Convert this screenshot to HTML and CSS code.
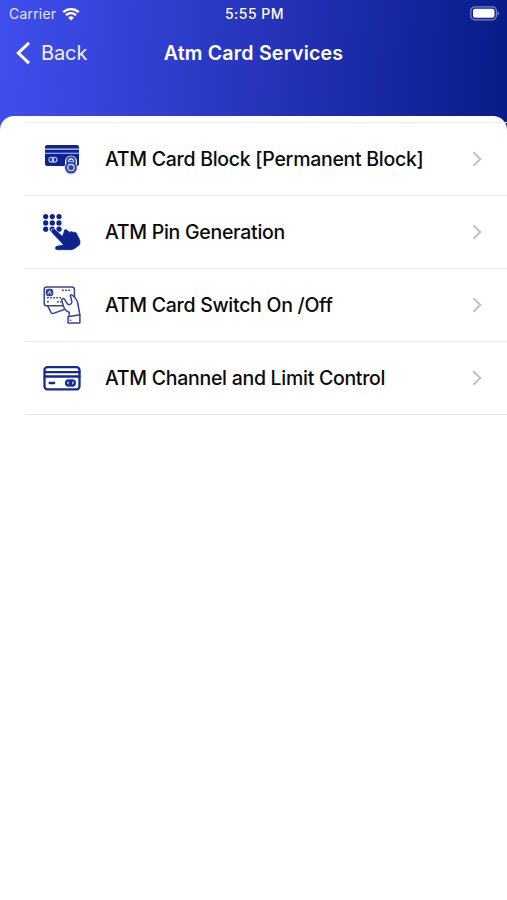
FILE: index.html
```html
<!DOCTYPE html>
<html lang="en">
  <head>
    <meta charset="UTF-8" />
    <meta name="viewport" content="width=device-width, initial-scale=1.0" />
    <title>Atm Card Services</title>

    <link rel="stylesheet" href="styles.css">
  </head>
  <body>
    <header class="header">
      <div class="status-bar">
        <div class="carrier">
          <span>Carrier</span>
          <svg class="wifi" viewBox="0 0 18 14" width="18" height="14">
            <path d="M1.2 5.2a11.2 11.2 0 0 1 15.6 0" />
            <path d="M4 8.2a7.2 7.2 0 0 1 10 0" />
            <path class="wifi-dot" d="M9 13.6 6.1 10.7a4.2 4.2 0 0 1 5.8 0Z" />
          </svg>
        </div>
        <span class="time">5:55 PM</span>
        <svg class="battery" viewBox="0 0 30 15" width="30" height="15">
          <rect class="battery-case" x="0.8" y="0.8" width="25.6" height="13" rx="4" />
          <rect class="battery-level" x="3" y="2.8" width="21.5" height="9" rx="2" />
          <path class="battery-cap" d="M27.7 5v4.6c1.8-.7 1.8-3.9 0-4.6Z" />
        </svg>
      </div>

      <div class="nav-bar">
        <a class="back" href="#">
          <svg class="back-arrow" viewBox="0 0 15 24" width="15" height="24">
            <path d="M13 1.8 2.3 12 13 22.2" />
          </svg>
          <span>Back</span>
        </a>
        <h1 class="title">Atm Card Services</h1>
      </div>
    </header>

    <main class="sheet">
      <ul class="menu">
        <li class="menu-item">
          <svg class="icon" viewBox="0 0 40 40">
            <path class="fill" d="M5 6h30a2 2 0 0 1 2 2v17a2 2 0 0 1-2 2H5a2 2 0 0 1-2-2V8a2 2 0 0 1 2-2Z" />
            <path class="cut" d="M3 10.1h34M3 14.2h34" />
            <circle class="cut" cx="9.3" cy="20.7" r="2.4" />
            <circle class="cut" cx="12.5" cy="20.7" r="2.4" />
            <path class="halo" d="M25 25v-2.5a4 4 0 0 1 8 0V25" />
            <circle class="lock-body" cx="29" cy="28.6" r="6.4" />
            <path class="shackle" d="M25.2 24v-2a3.8 3.8 0 0 1 7.6 0v2" />
            <circle class="lock-ring" cx="29" cy="28.6" r="3.2" />
          </svg>
          <span class="label">ATM Card Block [Permanent Block]</span>
          <svg class="chevron" viewBox="0 0 10 16"><path d="M1.3 1.3 8.3 8l-7 6.7" /></svg>
        </li>
        <li class="menu-item">
          <svg class="icon" viewBox="0 0 40 40">
            <g class="fill">
              <circle cx="3.7" cy="4.6" r="2.6" />
              <circle cx="10.3" cy="4.6" r="2.6" />
              <circle cx="17" cy="4.6" r="2.6" />
              <circle cx="3.7" cy="10.9" r="2.6" />
              <circle cx="10.3" cy="10.9" r="2.6" />
              <circle cx="17" cy="10.9" r="2.6" />
              <circle cx="3.7" cy="17.2" r="2.6" />
              <circle cx="10.3" cy="17.2" r="2.6" />
              <circle cx="17" cy="17.2" r="2.6" />
            </g>
            <path class="hand" d="M9.6 17.6c1.1-1.4 2.9-1.2 4 0l6.6 5.9 1.7-5.3c.5-1.3 2-1.6 3-.7l2.7 2.2c1.2-1.1 2.7-.9 3.7.3 1.7-.7 3.1-.1 3.8 1.4l2.7 5.3c1.3 3.3 1.3 5.6-1.6 7.9l-3.1 2.2c-1.5 1.1-2.9 1.5-4.7 1.5H15.7c-3.5 0-3.8-4.2-.5-4.8l5.5-.9L9.8 21c-1-1.1-1.1-2.3-.2-3.4Z" />
          </svg>
          <span class="label">ATM Pin Generation</span>
          <svg class="chevron" viewBox="0 0 10 16"><path d="M1.3 1.3 8.3 8l-7 6.7" /></svg>
        </li>
        <li class="menu-item">
          <svg class="icon thin" viewBox="0 0 40 40">
            <path d="M5.5 20.7 9 27.4a1.8 1.8 0 0 0 2.4 1l12.2-4.4" />
            <rect class="paper" x="2.2" y="2" width="30.2" height="18.8" rx="2.4" />
            <rect class="badge" x="4.5" y="4.4" width="6" height="6" rx="2" />
            <path d="m6 8.8 1.5-3 1.5 3" class="badge-mark" />
            <path class="dots" d="M20 5.3h9.5M5 12.8h14M5 16.8h3M15 16.8h4" />
            <path class="paper" d="M27.2 31.8v-4.5c-3.4-1-5-3.3-5.8-6.4l-1.6-5c-.7-2.2 2-3.2 3-1.2l2.5 4.1c2 1.6 4.4.6 4.6-2l-1.4-5.6c-.3-1.2.5-1.9 1.5-1.2 3.4 2.4 5.5 5.4 6 9.5l1.8 9.9" />
            <path class="paper" d="m26 31.8 11.9-2v8.2H26Z" />
            <path d="M28.3 35.3h.3" />
          </svg>
          <span class="label">ATM Card Switch On /Off</span>
          <svg class="chevron" viewBox="0 0 10 16"><path d="M1.3 1.3 8.3 8l-7 6.7" /></svg>
        </li>
        <li class="menu-item">
          <svg class="icon outline" viewBox="0 0 40 40">
            <rect x="2.5" y="9.1" width="35" height="22.2" rx="3" />
            <path d="M3 14.1h34.5M3 18.5h34.5M7.6 25h4.6" />
            <circle cx="26.7" cy="25" r="2.6" />
            <circle cx="30.2" cy="25" r="2.6" />
          </svg>
          <span class="label">ATM Channel and Limit Control</span>
          <svg class="chevron" viewBox="0 0 10 16"><path d="M1.3 1.3 8.3 8l-7 6.7" /></svg>
        </li>
      </ul>
    </main>
  </body>
</html>
```
FILE: styles.css
```css
/* General Styling */
* {
  box-sizing: border-box;
}

body {
  font-family: Inter, "Liberation Sans", sans-serif;
  margin: 0;
  height: 100vh;
  display: flex;
  flex-direction: column;
  background: linear-gradient(93deg, #404fed, #2433b8 54%, #081c88) no-repeat;
  background-size: 100% 130px;
}

svg {
  display: block;
  flex: none;
  fill: none;
}

/* Header */
.header {
  height: 115.5px;
  color: #fff;
}

.status-bar {
  height: 27px;
  padding: 0 7px 0 9px;
  display: grid;
  grid-template-columns: 1fr auto 1fr;
  align-items: center;
  font-size: 14px;
}

.carrier {
  display: flex;
  align-items: center;
  gap: 6px;
  color: #e4e6ff;
  letter-spacing: 0.2px;
}

.wifi {
  stroke: #fff;
  stroke-width: 2.3;
}

.wifi .wifi-dot {
  fill: #fff;
  stroke: none;
}

.time {
  font-weight: 500;
  letter-spacing: 0.5px;
}

.battery {
  justify-self: end;
}

.battery-case {
  stroke: #7d88cc;
  stroke-width: 1.2;
}

.battery-level {
  fill: #fff;
}

.battery-cap {
  fill: #7d88cc;
}

.nav-bar {
  height: 51px;
  padding: 0 16px;
  display: grid;
  grid-template-columns: 1fr auto 1fr;
  align-items: center;
}

.back {
  display: flex;
  align-items: center;
  gap: 10px;
  color: #f1f2ff;
  font-size: 20px;
  letter-spacing: -0.1px;
  text-decoration: none;
}

.back-arrow {
  stroke: #fff;
  stroke-width: 3;
}

.title {
  margin: 0;
  font-size: 19.6px;
  font-weight: 600;
  letter-spacing: 0.2px;
}

/* Menu Sheet */
.sheet {
  flex: 1;
  padding-top: 6px;
  background: #fff;
  border-radius: 14px 14px 0 0;
}

.menu {
  list-style: none;
  margin: 0 0 0 25px;
  padding: 0;
  border-top: 1px solid #eeeeee;
}

.menu-item {
  height: 73.2px;
  padding: 0 25px 0 17px;
  display: flex;
  align-items: center;
  border-bottom: 1.5px solid #e8e8e8;
}

.label {
  flex: 1;
  margin-left: 23px;
  color: #0b0b0b;
  font-size: 19.5px;
  font-weight: 500;
  letter-spacing: -0.28px;
  white-space: nowrap;
}

.chevron {
  width: 10px;
  height: 16px;
  stroke: #c2c2c4;
  stroke-width: 2.1;
}

/* Icons */
.icon {
  width: 40px;
  height: 40px;
  stroke-linecap: round;
  stroke-linejoin: round;
}

.fill {
  fill: #0c2390;
}

.cut {
  stroke: #c9cff0;
  stroke-width: 1.1;
}

.halo {
  stroke: #fff;
  stroke-width: 4;
}

.lock-body {
  fill: #33469f;
  stroke: #e1e5f7;
  stroke-width: 0.8;
}

.shackle {
  stroke: #33469f;
  stroke-width: 2;
}

.lock-ring {
  stroke: #dce1f6;
  stroke-width: 1.1;
}

.hand {
  fill: #0c2390;
  stroke: #fff;
  stroke-width: 0.6;
}

.thin {
  stroke: #35449d;
  stroke-width: 1.5;
}

.paper {
  fill: #fff;
}

.badge {
  fill: #35449d;
}

.badge-mark {
  stroke: #fff;
  stroke-width: 0.9;
}

.dots {
  stroke-width: 1.6;
  stroke-dasharray: 1.8 1.3;
  stroke-linecap: butt;
}

.outline {
  stroke: #152a94;
  stroke-width: 2.3;
}
```
